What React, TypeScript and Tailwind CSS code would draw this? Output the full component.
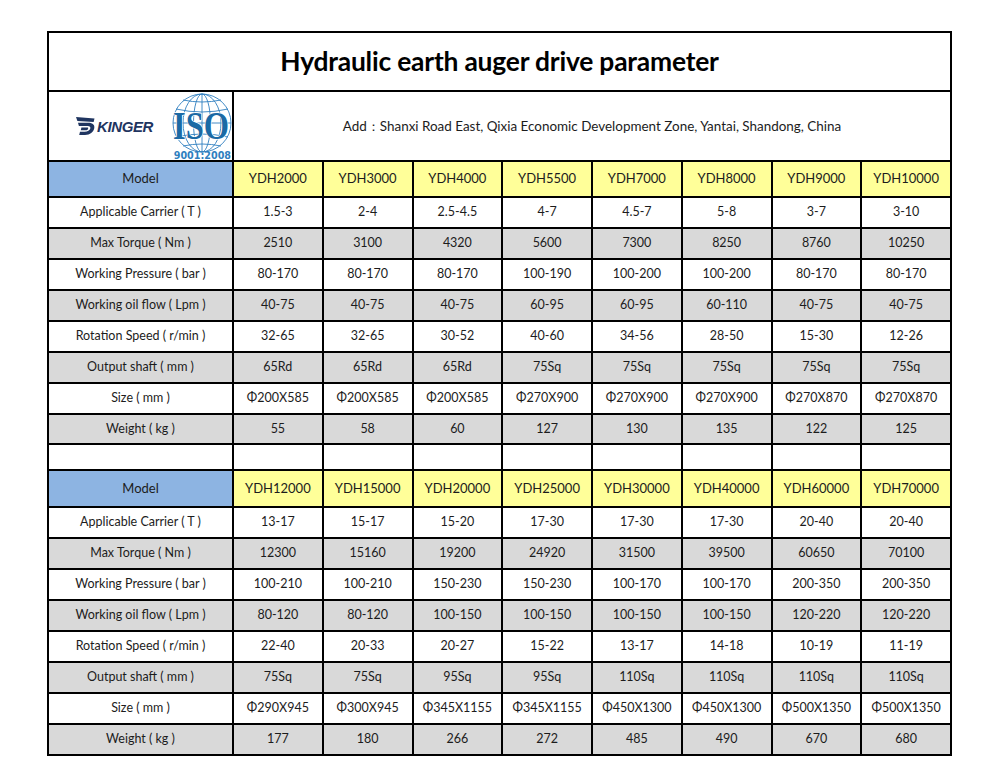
const cols = "grid grid-cols-[183px_repeat(8,minmax(0,1fr))] gap-[2px]";

type Section = {
  models: string[];
  rows: [string, string[]][];
};

const sections: Section[] = [
  {
    models: ["YDH2000", "YDH3000", "YDH4000", "YDH5500", "YDH7000", "YDH8000", "YDH9000", "YDH10000"],
    rows: [
      ["Applicable Carrier ( T )", ["1.5-3", "2-4", "2.5-4.5", "4-7", "4.5-7", "5-8", "3-7", "3-10"]],
      ["Max Torque ( Nm )", ["2510", "3100", "4320", "5600", "7300", "8250", "8760", "10250"]],
      ["Working Pressure ( bar )", ["80-170", "80-170", "80-170", "100-190", "100-200", "100-200", "80-170", "80-170"]],
      ["Working oil flow ( Lpm )", ["40-75", "40-75", "40-75", "60-95", "60-95", "60-110", "40-75", "40-75"]],
      ["Rotation Speed ( r/min )", ["32-65", "32-65", "30-52", "40-60", "34-56", "28-50", "15-30", "12-26"]],
      ["Output shaft ( mm )", ["65Rd", "65Rd", "65Rd", "75Sq", "75Sq", "75Sq", "75Sq", "75Sq"]],
      ["Size ( mm )", ["Φ200X585", "Φ200X585", "Φ200X585", "Φ270X900", "Φ270X900", "Φ270X900", "Φ270X870", "Φ270X870"]],
      ["Weight ( kg )", ["55", "58", "60", "127", "130", "135", "122", "125"]],
    ],
  },
  {
    models: ["YDH12000", "YDH15000", "YDH20000", "YDH25000", "YDH30000", "YDH40000", "YDH60000", "YDH70000"],
    rows: [
      ["Applicable Carrier ( T )", ["13-17", "15-17", "15-20", "17-30", "17-30", "17-30", "20-40", "20-40"]],
      ["Max Torque ( Nm )", ["12300", "15160", "19200", "24920", "31500", "39500", "60650", "70100"]],
      ["Working Pressure ( bar )", ["100-210", "100-210", "150-230", "150-230", "100-170", "100-170", "200-350", "200-350"]],
      ["Working oil flow ( Lpm )", ["80-120", "80-120", "100-150", "100-150", "100-150", "100-150", "120-220", "120-220"]],
      ["Rotation Speed ( r/min )", ["22-40", "20-33", "20-27", "15-22", "13-17", "14-18", "10-19", "11-19"]],
      ["Output shaft ( mm )", ["75Sq", "75Sq", "95Sq", "95Sq", "110Sq", "110Sq", "110Sq", "110Sq"]],
      ["Size ( mm )", ["Φ290X945", "Φ300X945", "Φ345X1155", "Φ345X1155", "Φ450X1300", "Φ450X1300", "Φ500X1350", "Φ500X1350"]],
      ["Weight ( kg )", ["177", "180", "266", "272", "485", "490", "670", "680"]],
    ],
  },
];

const KingerLogo = () => (
  <div className="flex items-center gap-[1px]">
    <svg width="21" height="20" viewBox="0 0 21 20">
      <path d="M1 1 L19.5 2.5 L18.6 6 L2.4 5 Z" fill="#1f3560" />
      <path d="M3 6.8 L13 6.8 C18.2 6.8 20 9.4 19.2 12.6 C18.4 16.2 15.2 19 10 19 L4.2 19 L5 15.8 L9.6 15.8 C12.6 15.8 14.8 14.4 15.3 12.6 C15.7 11 14.8 10 12.8 10 L3.9 10 Z" fill="#1f3560" />
      <path d="M6.4 11.6 L12.3 11.6 C13.1 11.6 13.4 12.1 13.1 12.7 C12.8 13.7 11.8 14.2 10.6 14.2 L5.8 14.2 Z" fill="#1f3560" />
    </svg>
    <span className="font-['Liberation_Sans',sans-serif] font-bold italic text-[15px] leading-none tracking-[-0.4px] text-[#1f3560]">
      KINGER
    </span>
  </div>
);

const IsoLogo = () => (
  <svg width="64" height="68" viewBox="0 0 64 68" className="overflow-visible">
    <g fill="none" stroke="#2f7fbf" strokeWidth="0.9">
      <circle cx="34" cy="31" r="29" />
      <ellipse cx="34" cy="31" rx="19" ry="29" />
      <ellipse cx="34" cy="31" rx="8.5" ry="29" />
      <line x1="34" y1="2" x2="34" y2="60" />
      <line x1="5" y1="31" x2="63" y2="31" />
      <path d="M8 17 Q34 23 60 17" />
      <path d="M8 45 Q34 39 60 45" />
      <path d="M15 8 Q34 12 53 8" />
      <path d="M15 54 Q34 50 53 54" />
    </g>
    <text
      x="5"
      y="47"
      textLength="56"
      lengthAdjust="spacingAndGlyphs"
      fontFamily="'Liberation Serif', serif"
      fontWeight="bold"
      fontSize="40"
      fill="#1b6aa5"
      stroke="#ffffff"
      strokeWidth="1.4"
      paintOrder="stroke"
    >
      ISO
    </text>
    <text
      x="63"
      y="67"
      textAnchor="end"
      fontFamily="'DejaVu Sans', sans-serif"
      fontWeight="bold"
      fontSize="9.6"
      fill="#2f7fbf"
    >
      9001:2008
    </text>
  </svg>
);

const Cell = ({ children, className = "" }: { children?: React.ReactNode; className?: string }) => (
  <div className={`flex items-center justify-center text-center ${className}`}>{children}</div>
);

export default function App() {
  return (
    <div className="w-[1000px] h-[780px] bg-white pt-[31px] pl-[47px] font-['Lato',sans-serif] text-[#1c1c1c]">
      <div className="w-[905px] bg-black p-[2px] flex flex-col gap-[2px]">
        <div className="h-[57px] bg-white flex items-center justify-center">
          <h1 className="font-bold text-[26.4px] tracking-[-0.2px] text-black leading-none">
            Hydraulic earth auger drive parameter
          </h1>
        </div>
        <div className={`${cols} h-[68px]`}>
          <div className="bg-white flex items-center justify-between pl-[26px]">
            <KingerLogo />
            <IsoLogo />
          </div>
          <div className="col-span-8 bg-white flex items-center justify-center text-[13.45px]">
            Add：Shanxi Road East, Qixia Economic Development Zone, Yantai, Shandong, China
          </div>
        </div>
        {sections.map((s, si) => (
          <div key={si} className="flex flex-col gap-[2px]">
            {si > 0 && (
              <div className={`${cols} h-[24px]`}>
                {Array.from({ length: 9 }).map((_, i) => (
                  <div key={i} className="bg-white" />
                ))}
              </div>
            )}
            <div className={`${cols} ${si === 0 ? "h-[34px]" : "h-[35px]"} text-[13px]`}>
              <Cell className="bg-[#8db4e2]">Model</Cell>
              {s.models.map((m) => (
                <Cell key={m} className="bg-[#ffff99]">
                  {m}
                </Cell>
              ))}
            </div>
            {s.rows.map(([label, vals], ri) => (
              <div
                key={label}
                className={`${cols} ${si === 0 && ri === 7 ? "h-[28px]" : "h-[29px]"} text-[12.5px]`}
              >
                <Cell className={ri % 2 ? "bg-[#d9d9d9]" : "bg-white"}>{label}</Cell>
                {vals.map((v, vi) => (
                  <Cell key={vi} className={ri % 2 ? "bg-[#d9d9d9]" : "bg-white"}>
                    {v}
                  </Cell>
                ))}
              </div>
            ))}
          </div>
        ))}
      </div>
    </div>
  );
}
